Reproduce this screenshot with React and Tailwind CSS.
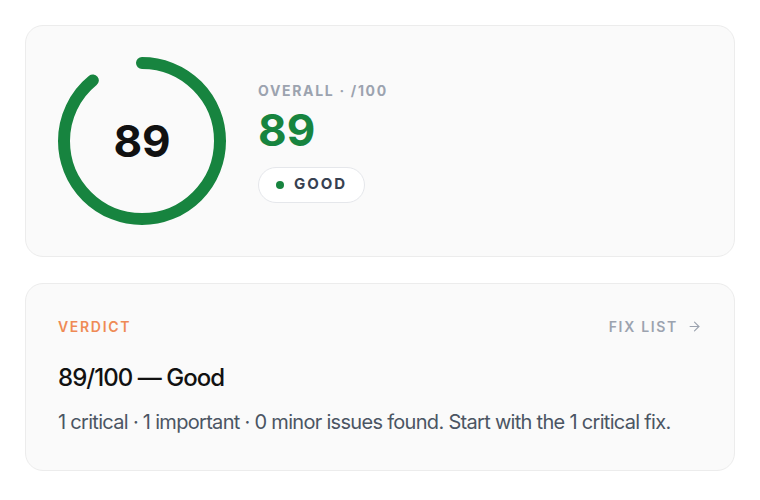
import React from 'react';

function ScoreRing({ score }) {
    const r = 78;
    const c = 2 * Math.PI * r;
    const dash = (score / 100) * c;
    return (
        <div className="relative w-[168px] h-[168px] shrink-0">
            <svg width="168" height="168" viewBox="0 0 168 168" className="-rotate-90">
                <circle
                    cx="84"
                    cy="84"
                    r={r}
                    fill="none"
                    stroke="#17843f"
                    strokeWidth="12"
                    strokeLinecap="round"
                    strokeDasharray={`${dash} ${c}`}
                />
            </svg>
            <div className="absolute inset-0 flex items-center justify-center text-[44px] font-bold text-[#111111]">
                {score}
            </div>
        </div>
    );
}

export default function App() {
    return (
        <div className="min-h-[500px] bg-white px-[25px] pt-[25px] font-['Inter',sans-serif] flex flex-col gap-[26px]">
            <div className="bg-[#fafafa] border border-[#ececec] rounded-[18px] px-8 py-[31px] flex items-center gap-8 w-[710px]">
                <ScoreRing score={89} />
                <div className="flex flex-col pt-[4px]">
                    <div className="text-[14px] font-bold tracking-[0.12em] text-[#9ca3af] leading-none">
                        OVERALL · /100
                    </div>
                    <div className="text-[44px] font-bold text-[#17843f] leading-none mt-[10px]">89</div>
                    <div className="mt-[15px] self-start flex items-center gap-[10px] bg-white border border-[#e5e7eb] rounded-full h-[36px] px-[17px]">
                        <span className="w-[8px] h-[8px] rounded-full bg-[#17843f]" />
                        <span className="text-[15px] font-bold tracking-[0.13em] text-[#374151]">GOOD</span>
                    </div>
                </div>
            </div>

            <div className="bg-[#fafafa] border border-[#ececec] rounded-[18px] px-8 pt-[35px] pb-[38px] w-[710px]">
                <div className="flex items-center justify-between">
                    <span className="text-[14px] font-semibold tracking-[0.12em] text-[#ef8a55] leading-none">VERDICT</span>
                    <span className="flex items-center gap-[9px] text-[14px] font-semibold tracking-[0.12em] text-[#9ca3af] leading-none">
                        FIX LIST
                        <svg width="15" height="15" viewBox="0 0 24 24" fill="none" stroke="currentColor" strokeWidth="1.8" strokeLinecap="round" strokeLinejoin="round">
                            <path d="M5 12h14" />
                            <path d="m12 5 7 7-7 7" />
                        </svg>
                    </span>
                </div>
                <div className="mt-[32px] text-[24px] font-medium text-[#111111] tracking-[-0.04em] leading-none">
                    89/100 — Good
                </div>
                <div className="mt-[22px] text-[20px] text-[#4b5563] tracking-[-0.035em] leading-none">
                    1 critical · 1 important · 0 minor issues found. Start with the 1 critical fix.
                </div>
            </div>
        </div>
    );
}
